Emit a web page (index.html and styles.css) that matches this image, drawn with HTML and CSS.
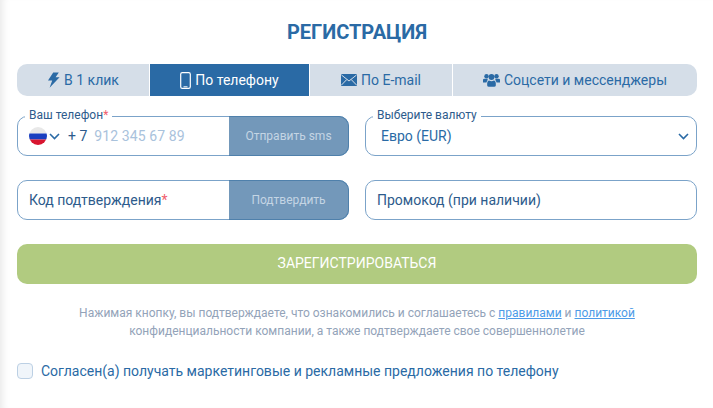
FILE: index.html
```html
<!DOCTYPE html>
<html lang="ru">
<head>
    <meta charset="UTF-8">
    <meta name="viewport" content="width=device-width, initial-scale=1.0">
    <title>Регистрация</title>
    <link rel="stylesheet" href="styles.css">
</head>
<body>
    <div class="container">
        <h1 class="title">РЕГИСТРАЦИЯ</h1>

        <div class="tabs">
            <div class="tab tab-click">
                <svg class="icon" width="13" height="16" viewBox="0 0 13 16"><path d="M6.2 0.4 L11.8 0.4 L8.6 5.2 L12.6 5.2 L2.6 15.8 L5.2 8.4 L1 8.4 Z" fill="#2a6aa5"/></svg>
                В 1 клик
            </div>
            <div class="tab tab-phone active">
                <svg class="icon" width="11" height="17" viewBox="0 0 11 17"><rect x="0.7" y="0.7" width="9.6" height="15.6" rx="1.6" fill="none" stroke="#fff" stroke-width="1.2"/><path d="M3.5 14.8h4" stroke="#fff" stroke-width="1"/></svg>
                По телефону
            </div>
            <div class="tab tab-mail">
                <svg class="icon" width="16" height="12" viewBox="0 0 16 12"><rect width="16" height="12" rx="1" fill="#2a6aa5"/><path d="M0.5 1 L8 7 L15.500 1 M0.500 11 L5.800 5.500 M15.500 11 L10.200 5.500" fill="none" stroke="#d5dee8" stroke-width="1"/></svg>
                По E-mail
            </div>
            <div class="tab tab-social">
                <svg class="icon" width="17" height="14" viewBox="0 0 17 14"><g fill="#2a6aa5"><circle cx="3.500" cy="3.200" r="2.200"/><circle cx="13.500" cy="3.200" r="2.200"/><circle cx="8.500" cy="4" r="2.900"/><path d="M0 6.800 Q0 5.800 1.500 5.800 L4.800 5.800 Q4.600 7.600 3.400 9.600 L0 9.600 Z"/><path d="M17 6.800 Q17 5.800 15.500 5.800 L12.200 5.800 Q12.400 7.600 13.600 9.600 L17 9.600 Z"/><path d="M4.200 12.500 Q3.800 7.600 6 7.400 Q8.500 9 11 7.400 Q13.200 7.600 12.800 12.500 Q12.600 13.800 11.200 13.800 L5.800 13.800 Q4.400 13.800 4.200 12.500 Z"/></g></svg>
                Соцсети и мессенджеры
            </div>
        </div>

        <div class="row">
            <div class="field">
                <span class="field-label">Ваш телефон<i class="req">*</i></span>
                <div class="field-body phone-body">
                    <svg class="flag" width="18" height="18" viewBox="0 0 18 18"><defs><clipPath id="round"><circle cx="9" cy="9" r="9"/></clipPath></defs><g clip-path="url(#round)"><rect width="18" height="6.500" fill="#e8e8e8"/><rect y="6.500" width="18" height="6" fill="#1a3fc0"/><rect y="12.500" width="18" height="5.500" fill="#d8152f"/></g></svg>
                    <svg class="chevron" width="11" height="7" viewBox="0 0 11 7"><path d="M1 1l4.500 4.500L10 1" fill="none" stroke="#2a6aa5" stroke-width="1.600"/></svg>
                    <span class="code">+ 7</span>
                    <span class="placeholder">912 345 67 89</span>
                </div>
                <div class="field-btn">Отправить sms</div>
            </div>
            <div class="field">
                <span class="field-label">Выберите валюту</span>
                <div class="field-body currency-body">
                    <span class="currency">Евро (EUR)</span>
                    <svg class="chevron" width="11" height="7" viewBox="0 0 11 7"><path d="M1 1l4.500 4.500L10 1" fill="none" stroke="#2a6aa5" stroke-width="1.600"/></svg>
                </div>
            </div>
        </div>

        <div class="row">
            <div class="field">
                <div class="field-body"><span class="dark">Код подтверждения<i class="req">*</i></span></div>
                <div class="field-btn">Подтвердить</div>
            </div>
            <div class="field">
                <div class="field-body"><span class="dark">Промокод (при наличии)</span></div>
            </div>
        </div>

        <div class="submit">ЗАРЕГИСТРИРОВАТЬСЯ</div>

        <p class="terms">Нажимая кнопку, вы подтверждаете, что ознакомились и соглашаетесь с <a href="#">правилами</a> и <a href="#">политикой</a><br>конфиденциальности компании, а также подтверждаете свое совершеннолетие</p>

        <label class="agree">
            <span class="checkbox"></span>
            Согласен(а) получать маркетинговые и рекламные предложения по телефону
        </label>
    </div>
</body>
</html>
```

FILE: styles.css
```css
html, body {
    margin: 0;
    padding: 0;
    background-color: #fff;
}

body {
    font-family: Roboto, "Liberation Sans", sans-serif;
    color: #2a6aa5;
    box-shadow: inset 9px 0 8px -7px rgba(0, 0, 0, 0.1);
    height: 408px;
    overflow: hidden;
}

.container {
    padding: 0 16px 0 17px;
}

.title {
    margin: 0;
    padding-top: 20px;
    height: 64px;
    box-sizing: border-box;
    line-height: 24px;
    font-size: 20px;
    font-weight: 700;
    text-align: center;
    color: #2a6aa5;
}

.tabs {
    display: flex;
    gap: 1px;
    height: 32px;
    border-radius: 10px;
    overflow: hidden;
}

.tab {
    display: flex;
    align-items: center;
    justify-content: center;
    gap: 4px;
    background-color: #d5dee8;
    font-size: 14px;
    white-space: nowrap;
}

.tab-click { width: 132px; }
.tab-phone { width: 159px; }
.tab-mail { width: 142px; }
.tab-social { flex: 1; }

.tab.active {
    background-color: #2a6aa5;
    color: #fff;
}

.row {
    display: grid;
    grid-template-columns: 332px 332px;
    gap: 16px;
    margin-top: 20px;
}

.row + .row {
    margin-top: 24px;
}

.field {
    position: relative;
    display: flex;
    height: 40px;
    box-sizing: border-box;
    border: 1px solid #7ba3c9;
    border-radius: 10px;
}

.field-label {
    position: absolute;
    top: -9px;
    left: 7px;
    padding: 0 4px;
    background-color: #fff;
    font-size: 12px;
    line-height: 15px;
    color: #2d5b8c;
}

.req {
    font-style: normal;
    color: #f0606e;
}

.field-body {
    flex: 1;
    display: flex;
    align-items: center;
    padding: 0 11px;
    font-size: 14px;
}

.phone-body .chevron {
    margin-left: 2px;
}

.code {
    margin-left: 8px;
    color: #2d5b8c;
}

.placeholder {
    margin-left: 7px;
    letter-spacing: 0.1px;
    color: #a9c2dc;
}

.currency-body {
    justify-content: space-between;
    padding: 0 7px 0 15px;
}

.dark {
    color: #2d5b8c;
}

.field-btn {
    display: flex;
    align-items: center;
    justify-content: center;
    width: 120px;
    box-sizing: border-box;
    margin: -1px -1px -1px 0;
    border: 1px solid #4f80ab;
    border-left: none;
    border-radius: 0 10px 10px 0;
    background-color: #7398ba;
    font-size: 12px;
    color: #c4d5e4;
}

.submit {
    margin-top: 24px;
    height: 40px;
    line-height: 38px;
    border-radius: 10px;
    background-color: #b1cb80;
    font-size: 14px;
    text-align: center;
    color: #fff;
}

.terms {
    margin: 20px 0 0;
    font-size: 12px;
    line-height: 18px;
    text-align: center;
    color: #93a3b9;
}

.terms a {
    color: #4d9be8;
}

.agree {
    display: flex;
    align-items: center;
    gap: 8px;
    margin-top: 23px;
    font-size: 14px;
    color: #2a6aa5;
}

.checkbox {
    width: 16px;
    height: 16px;
    box-sizing: border-box;
    border: 1px solid #bcd0e4;
    border-radius: 4px;
    background-color: #f0f5fa;
}
```
